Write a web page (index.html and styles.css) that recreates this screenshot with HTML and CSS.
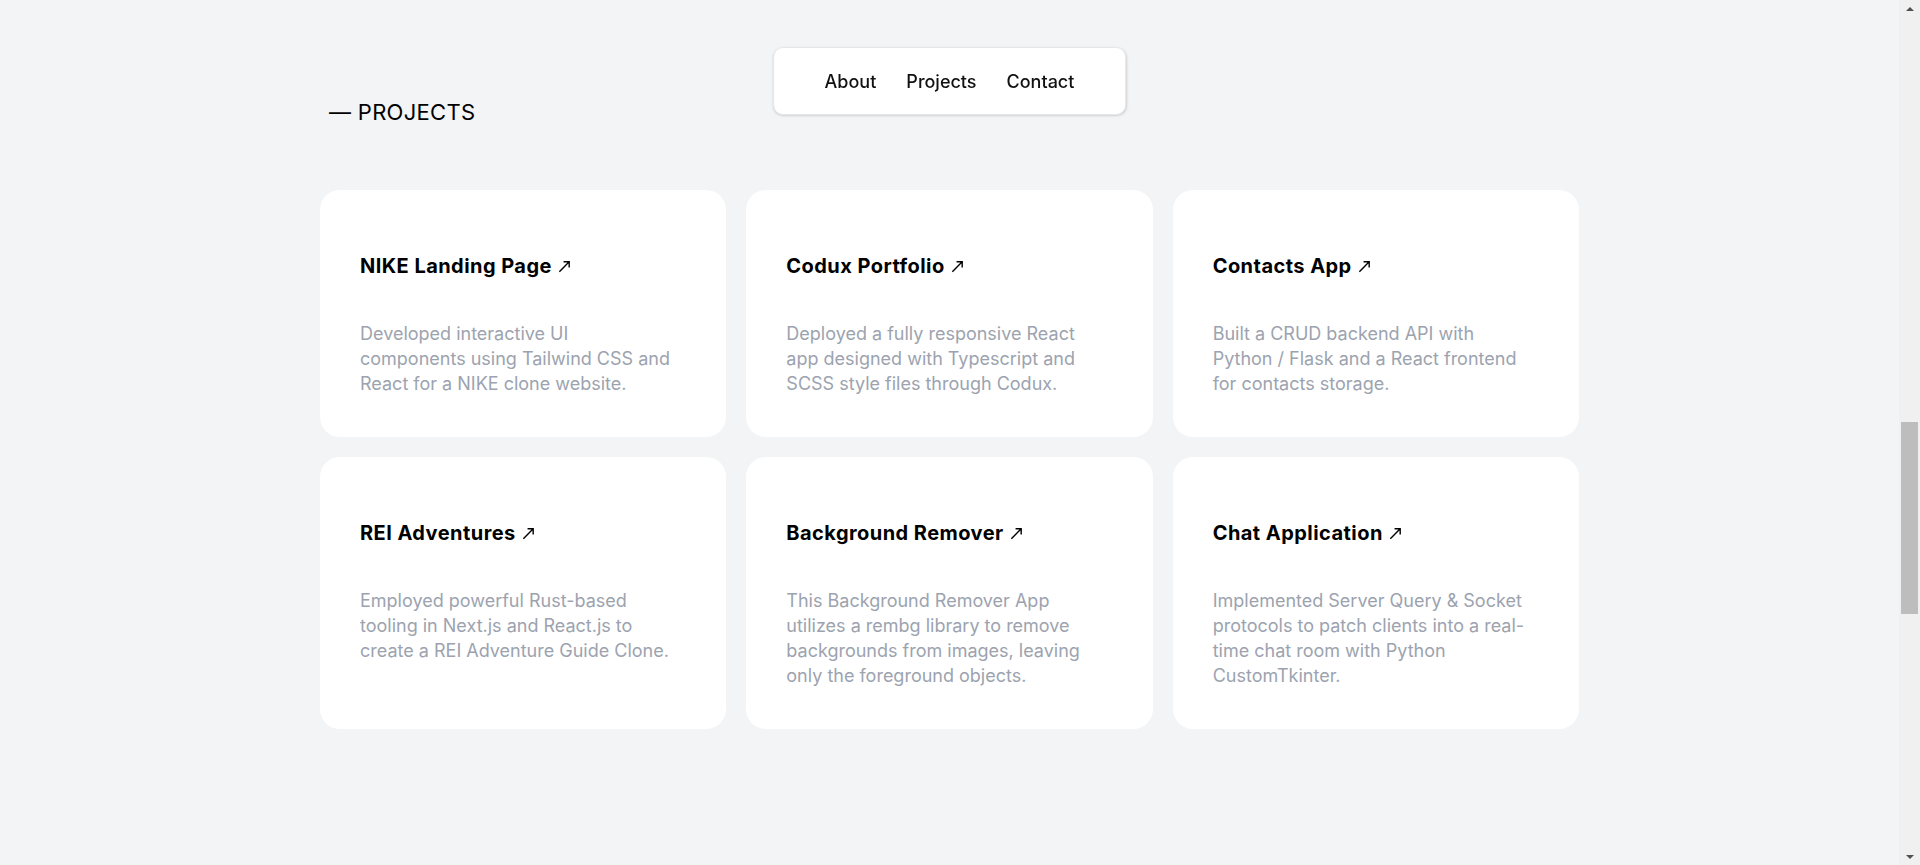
FILE: index.html
```html
<!DOCTYPE html>
<html lang="en">
<head>
<meta charset="utf-8">
<title>Projects</title>
<link rel="stylesheet" href="styles.css">
</head>
<body>
<nav class="nav">
  <a href="#about">About</a>
  <a href="#projects">Projects</a>
  <a href="#contact">Contact</a>
</nav>
<main class="page">
  <section class="projects" id="projects">
    <h2 class="section-title">— PROJECTS</h2>
    <div class="grid">
      <article class="card">
        <h3 class="card-title">NIKE Landing Page <svg class="arrow" viewBox="0 0 16 16" width="15" height="15"><path d="M2.5 13.5 L13 3 M7 3 H13 V9" /></svg></h3>
        <p class="card-desc">Developed interactive UI components using Tailwind CSS and React for a NIKE clone website.</p>
      </article>
      <article class="card">
        <h3 class="card-title">Codux Portfolio <svg class="arrow" viewBox="0 0 16 16" width="15" height="15"><path d="M2.5 13.5 L13 3 M7 3 H13 V9" /></svg></h3>
        <p class="card-desc">Deployed a fully responsive React app designed with Typescript and SCSS style files through Codux.</p>
      </article>
      <article class="card">
        <h3 class="card-title">Contacts App <svg class="arrow" viewBox="0 0 16 16" width="15" height="15"><path d="M2.5 13.5 L13 3 M7 3 H13 V9" /></svg></h3>
        <p class="card-desc">Built a CRUD backend API with Python / Flask and a React frontend for contacts storage.</p>
      </article>
      <article class="card">
        <h3 class="card-title">REI Adventures <svg class="arrow" viewBox="0 0 16 16" width="15" height="15"><path d="M2.5 13.5 L13 3 M7 3 H13 V9" /></svg></h3>
        <p class="card-desc">Employed powerful Rust-based tooling in Next.js and React.js to create a REI Adventure Guide Clone.</p>
      </article>
      <article class="card">
        <h3 class="card-title">Background Remover <svg class="arrow" viewBox="0 0 16 16" width="15" height="15"><path d="M2.5 13.5 L13 3 M7 3 H13 V9" /></svg></h3>
        <p class="card-desc">This Background Remover App utilizes a rembg library to remove backgrounds from images, leaving only the foreground objects.</p>
      </article>
      <article class="card">
        <h3 class="card-title">Chat Application <svg class="arrow" viewBox="0 0 16 16" width="15" height="15"><path d="M2.5 13.5 L13 3 M7 3 H13 V9" /></svg></h3>
        <p class="card-desc">Implemented Server Query &amp; Socket protocols to patch clients into a real-time chat room with Python CustomTkinter.</p>
      </article>
    </div>
  </section>
</main>
<div class="scrollbar" aria-hidden="true">
  <span class="sb-arrow sb-up"></span>
  <span class="sb-track"><span class="sb-thumb"></span></span>
  <span class="sb-arrow sb-down"></span>
</div>
</body>
</html>
```

FILE: styles.css
```css
body {
  margin: 0;
  padding-right: 21px;
  background: #f3f4f6;
  font-family: Inter, "Noto Sans", sans-serif;
  color: #000;
}

.nav {
  position: fixed;
  top: 47px;
  left: calc(50% - 10.5px);
  transform: translateX(-50%);
  height: 68px;
  box-sizing: border-box;
  padding: 1px 51px 0;
  display: flex;
  align-items: center;
  gap: 30px;
  background: #fff;
  border: 1px solid #e5e7eb;
  border-radius: 10px;
  box-shadow: 0 1px 3px rgba(0, 0, 0, 0.1), 0 1px 2px rgba(0, 0, 0, 0.06);
  z-index: 10;
}

.nav a {
  color: #111;
  text-decoration: none;
  font-size: 18px;
  font-weight: 500;
  line-height: 24px;
}

.page {
  width: 1259px;
  margin: 0 auto;
  padding-top: 98px;
  padding-bottom: 136px;
}

.section-title {
  margin: 0 0 64px 9px;
  font-size: 22px;
  font-weight: 400;
  line-height: 28px;
  letter-spacing: 0.3px;
  color: #000;
}

.grid {
  display: grid;
  grid-template-columns: repeat(3, 1fr);
  gap: 20px;
}

.card {
  background: #fff;
  border-radius: 20px;
  padding: 40px 40px 41px;
}

.card-title {
  margin: 22px 0 0;
  font-size: 20px;
  font-weight: 700;
  line-height: 28px;
  letter-spacing: 0.45px;
  color: #000;
}

.arrow {
  fill: none;
  stroke: #000;
  stroke-width: 1.5;
  vertical-align: -1px;
  margin-left: 0;
}

.card-desc {
  max-width: 314px;
  margin: 41px 0 0;
  font-size: 18px;
  line-height: 25px;
  color: #9ca3af;
}

.scrollbar {
  position: fixed;
  top: 0;
  right: 0;
  bottom: 0;
  width: 21px;
  display: flex;
  flex-direction: column;
  background: #f0f0f0;
  z-index: 20;
}

.sb-arrow {
  height: 17px;
  display: flex;
  align-items: center;
  justify-content: center;
}

.sb-arrow::before {
  content: "";
  border-left: 4px solid transparent;
  border-right: 4px solid transparent;
}

.sb-up::before {
  border-bottom: 4px solid #505050;
}

.sb-down::before {
  border-top: 4px solid #505050;
}

.sb-track {
  flex: 1;
  padding-top: 405px;
}

.sb-thumb {
  display: block;
  height: 192px;
  margin: 0 2px;
  background: #bdbdbd;
}
```
